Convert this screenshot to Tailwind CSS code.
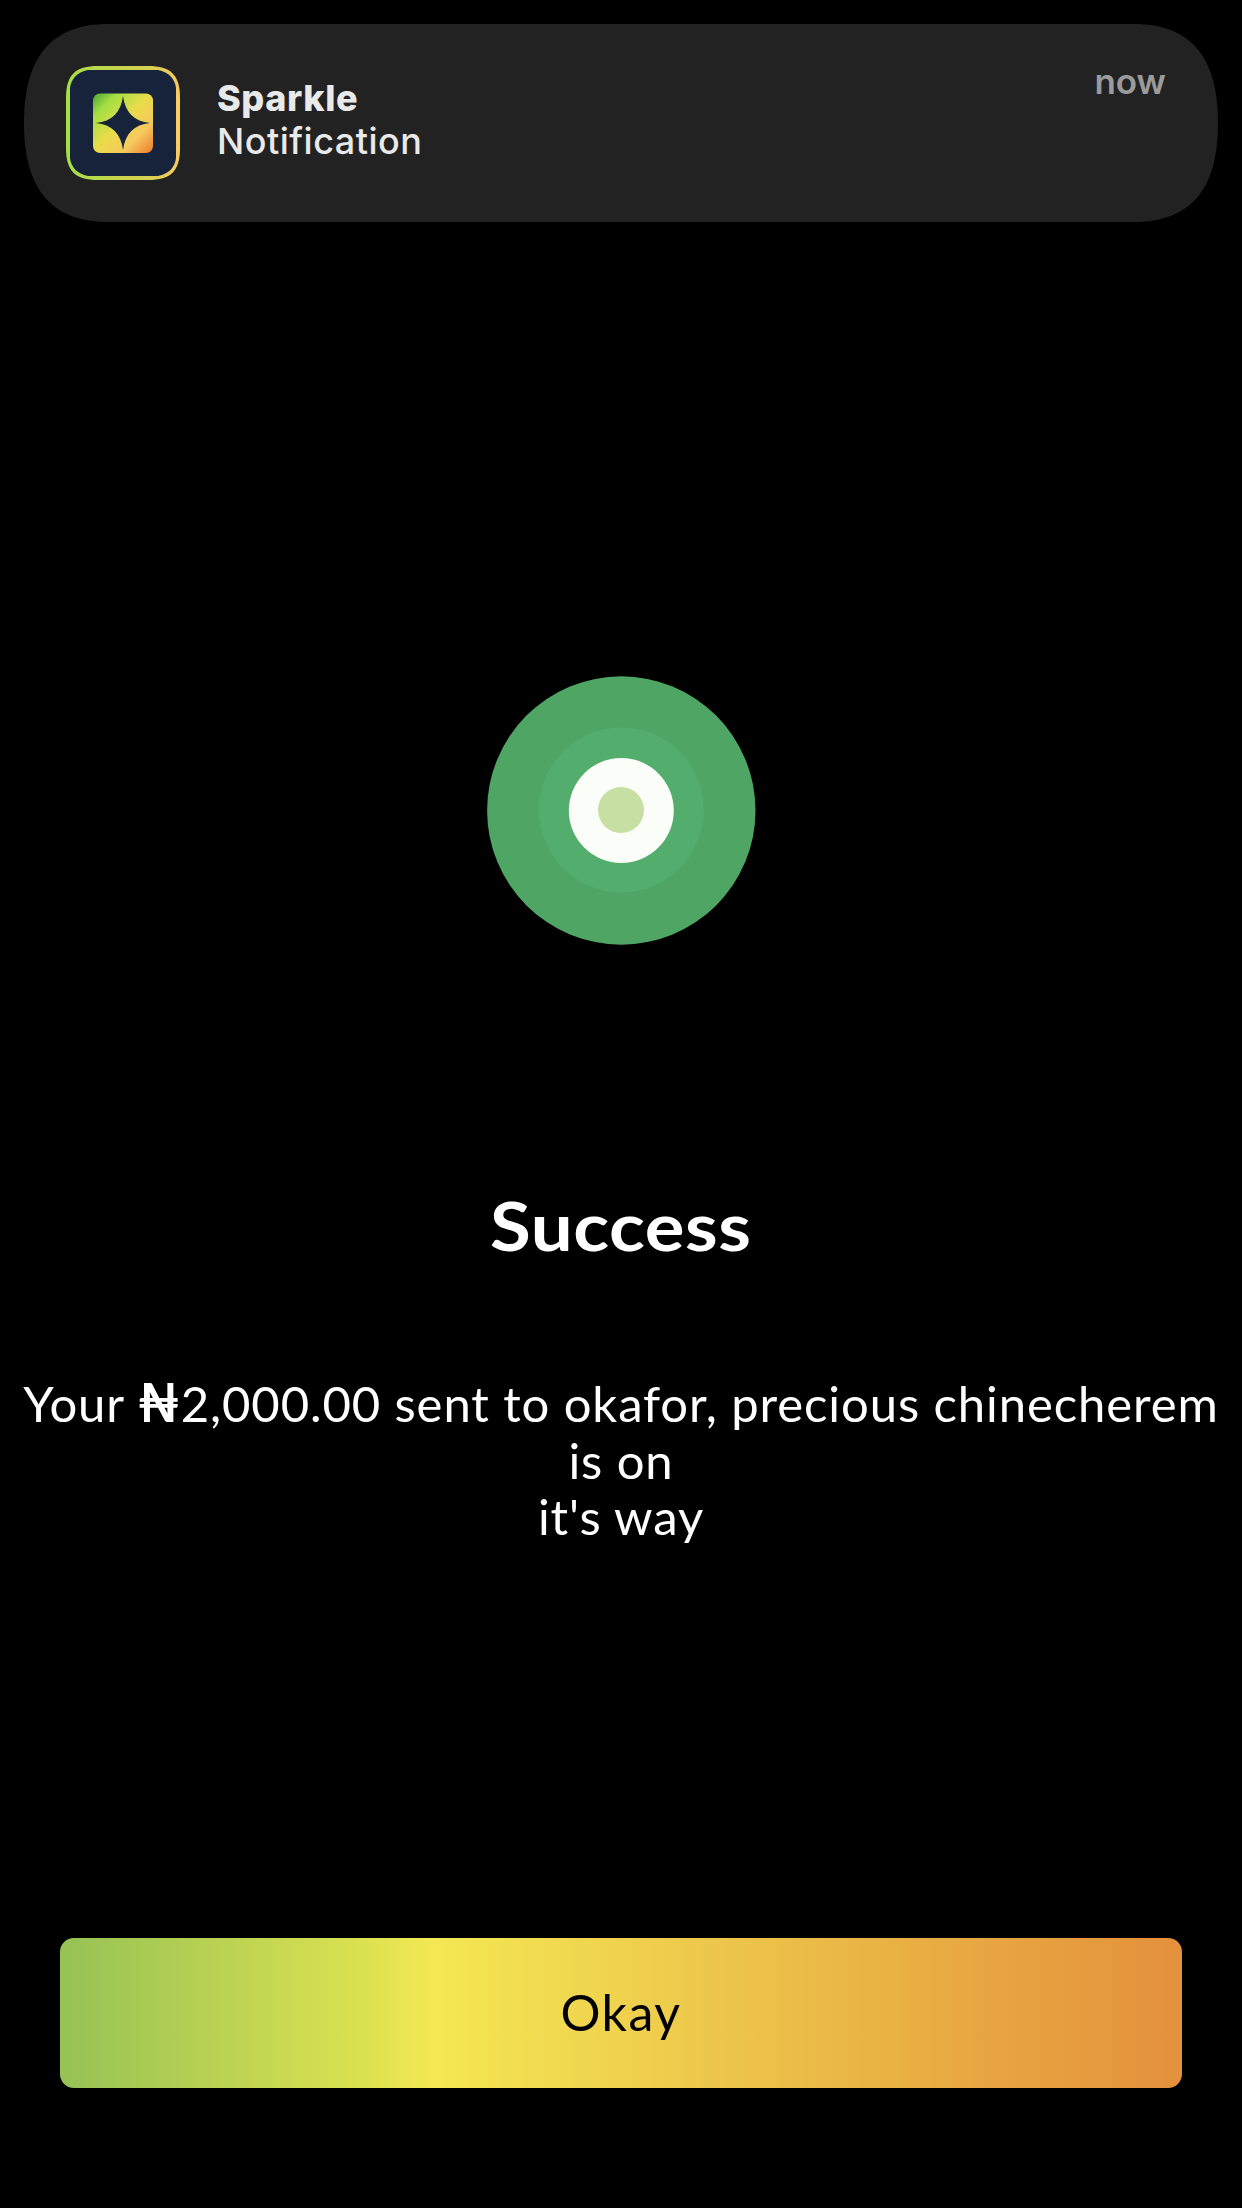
<!DOCTYPE html>
<html lang="en">
<head>
    <meta charset="UTF-8">
    <meta name="viewport" content="width=device-width, initial-scale=1.0">
    <title>Success</title>
    <script src="https://cdn.jsdelivr.net/npm/@tailwindcss/browser@4"></script>
</head>
<body class="bg-black">
<main class="flex flex-col items-center w-[1242px] h-[2208px] bg-black overflow-hidden font-[Lato,'Noto_Sans',sans-serif] text-white">

    <!-- notification banner -->
    <header class="relative mt-6 w-[1194px] h-[198px] shrink-0 font-[Inter,sans-serif]">
        <svg class="absolute inset-0" width="1194" height="198" viewBox="0 0 1194 198">
            <path fill="#222222" d="M84 0H1110C1166 0 1194 32 1194 99C1194 166 1166 198 1110 198H84C28 198 0 166 0 99C0 32 28 0 84 0Z"/>
        </svg>
        <div class="relative flex h-full pl-[42px] pr-[52px]">
            <svg class="mt-[42px] shrink-0" width="114" height="114" viewBox="0 0 114 114">
                <defs>
                    <linearGradient id="frame" x1="0" y1="0" x2="1" y2="0">
                        <stop offset="0" stop-color="#a2e045"/>
                        <stop offset="0.25" stop-color="#b9d94a"/>
                        <stop offset="0.75" stop-color="#d9cf50"/>
                        <stop offset="1" stop-color="#fbcb62"/>
                    </linearGradient>
                    <linearGradient id="tile" x1="0" y1="0" x2="1" y2="1">
                        <stop offset="0.02" stop-color="#51a834"/>
                        <stop offset="0.2" stop-color="#a3df43"/>
                        <stop offset="0.48" stop-color="#e9dc49"/>
                        <stop offset="0.74" stop-color="#f5c95e"/>
                        <stop offset="1" stop-color="#ee7a2b"/>
                    </linearGradient>
                </defs>
                <path fill="url(#frame)" d="M32 0H82C105 0 114 9 114 32V82C114 105 105 114 82 114H32C9 114 0 105 0 82V32C0 9 9 0 32 0Z"/>
                <path fill="#17233a" d="M22 4H92C103 6 109 13 110 22V92C109 101 103 108 92 110H22C11 108 5 101 4 92V22C5 13 11 6 22 4Z"/>
                <rect x="27" y="27.500" width="60" height="59.500" rx="7" fill="url(#tile)"/>
                <path fill="#17233a" d="M57 30C59 46 68 55.500 84 57C68 58.500 59 68 57 84C55 68 46 58.500 30 57C46 55.500 55 46 57 30Z"/>
            </svg>
            <div class="ml-[37px] mt-[53px] flex flex-col text-[36px] leading-[43px] text-[#e9e9e9]">
                <span class="font-extrabold tracking-[0.6px]">Sparkle</span>
                <span class="font-medium tracking-[0.5px]">Notification</span>
            </div>
            <span class="ml-auto mt-[36px] text-[35px] leading-[43px] font-semibold text-[#9b9b9b]">now</span>
        </div>
    </header>

    <!-- success pulse -->
    <svg class="mt-[454px] shrink-0" width="270" height="270" viewBox="0 0 270 270">
        <circle cx="135.300" cy="134.500" r="134.200" fill="#4ea564"/>
        <circle cx="135.300" cy="134" r="82.500" fill="#53ae6e"/>
        <circle cx="135.300" cy="134.500" r="52.500" fill="#fafdf8"/>
        <circle cx="135" cy="134" r="23" fill="#c7dfa2"/>
    </svg>

    <h1 class="mt-[239px] text-[67px] leading-[80px] font-bold tracking-[0.5px] scale-x-[1.11]">Success</h1>

    <p class="mt-[110px] text-center text-[49px] leading-[56.5px] tracking-[0.9px] whitespace-nowrap">Your <span class="font-bold text-[53px] leading-none">₦</span>2,000.00 sent to okafor, precious chinecherem<br>is on<br>it's way</p>

    <button class="mt-[393px] w-[1122px] h-[150px] shrink-0 rounded-[14px] bg-[linear-gradient(90deg,#95c255_0%,#dbe150_27%,#f4e853_33%,#eecb4c_55%,#e8a942_80%,#e4903c_100%)] text-[50px] text-black tracking-[1.5px]">Okay</button>
</main>
</body>
</html>
